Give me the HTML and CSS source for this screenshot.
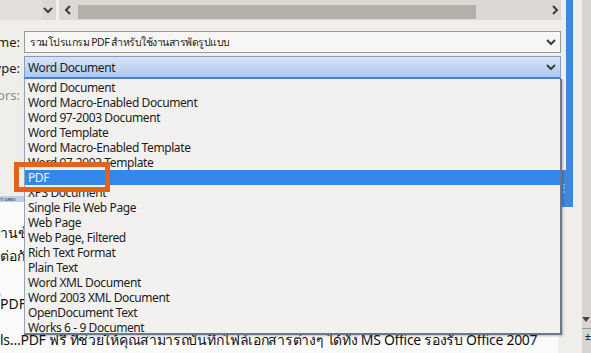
FILE: index.html
```html
<!DOCTYPE html>
<html lang="th">

<head>
    <meta charset="UTF-8">
    <meta name="viewport" content="width=device-width, initial-scale=1.0">
    <title>Save As</title>
    <link rel="stylesheet" href="styles.css">
</head>

<body>
    <div class="main">
        <!-- แถบเลื่อนแนวนอนด้านบน -->
        <div class="hbar">
            <div class="hbar-left"></div>
            <svg class="chev" width="10" height="8" viewBox="0 0 10 8"><polyline points="1,2 5,6 9,2" fill="none" stroke="#3c3c3c" stroke-width="2"/></svg>
            <div class="hbar-sep"></div>
            <svg class="arrow-left" width="8" height="10" viewBox="0 0 8 10"><polyline points="6,1 2,5 6,9" fill="none" stroke="#3c3c3c" stroke-width="2"/></svg>
            <div class="hbar-thumb"></div>
            <div class="hbar-rest"></div>
            <svg class="arrow-right" width="8" height="10" viewBox="0 0 8 10"><polyline points="2,1 6,5 2,9" fill="none" stroke="#3c3c3c" stroke-width="2"/></svg>
        </div>

        <!-- ฟอร์มบันทึกไฟล์ -->
        <div class="row row-name">
            <div class="label"><span>File name:</span></div>
            <div class="combo">
                <span class="combo-text combo-thai">รวมโปรแกรม PDF สำหรับใช้งานสารพัดรูปแบบ</span>
                <svg class="chev" width="10" height="8" viewBox="0 0 10 8"><polyline points="1,2 5,6 9,2" fill="none" stroke="#3c3c3c" stroke-width="2"/></svg>
            </div>
        </div>
        <div class="row row-type">
            <div class="label"><span>Save as type:</span></div>
            <div class="combo combo-active">
                <span class="combo-text">Word Document</span>
                <svg class="chev" width="10" height="8" viewBox="0 0 10 8"><polyline points="1,2 5,6 9,2" fill="none" stroke="#3c3c3c" stroke-width="2"/></svg>
            </div>
        </div>
        <div class="row row-authors">
            <div class="label label-muted"><span>Authors:</span></div>
        </div>

        <!-- เอกสารด้านหลัง -->
        <div class="doc">
            <div class="doc-ribbon"><span>ร่ แสดง</span></div>
            <p class="doc-line line-1">านข้อมูลของเอกสาร</p>
            <p class="doc-line line-2">ต่อกับโปรแกรม</p>
            <p class="doc-line line-3">ี้PDF</p>
            <p class="doc-line line-4">ls…PDF ฟรี ที่ช่วยให้คุณสามารถบันทึกไฟล์เอกสารต่างๆ ได้ทั้ง MS Office รองรับ Office 2007</p>
            <p class="doc-line line-5">ดาวน์โหลด ฟรี ทั้งหมด ที่นี่ ได้เลย</p>
        </div>

        <!-- รายการประเภทไฟล์ -->
        <ul class="type-list">
            <li>Word Document</li>
            <li>Word Macro-Enabled Document</li>
            <li>Word 97-2003 Document</li>
            <li>Word Template</li>
            <li>Word Macro-Enabled Template</li>
            <li>Word 97-2003 Template</li>
            <li class="selected">PDF</li>
            <li>XPS Document</li>
            <li>Single File Web Page</li>
            <li>Web Page</li>
            <li>Web Page, Filtered</li>
            <li>Rich Text Format</li>
            <li>Plain Text</li>
            <li>Word XML Document</li>
            <li>Word 2003 XML Document</li>
            <li>OpenDocument Text</li>
            <li>Works 6 - 9 Document</li>
        </ul>

        <div class="highlight-box"></div>
    </div>

    <!-- ขอบหน้าต่างด้านขวา -->
    <div class="vscroll">
        <div class="vtrack"></div>
        <div class="vthumb"><span class="grip"></span></div>
    </div>
    <div class="edge-gap"></div>
    <div class="edge-grey">
        <div class="edge-tools">
            <span class="edge-tri"></span>
            <span class="edge-line"></span>
            <span class="edge-mark">±</span>
        </div>
    </div>
</body>

</html>
```

FILE: styles.css
```css
:root {
    --dialog-bg: #f0eeeb;
    --text-dark: #1c1c1c;
    --select-blue: #3488ea;
    --mark-orange: #e9601b;
}

* {
    margin: 0;
    padding: 0;
    box-sizing: border-box;
}

body {
    width: 591px;
    height: 353px;
    overflow: hidden;
    display: flex;
    background: var(--dialog-bg);
    font-family: 'Noto Sans', 'DejaVu Sans', sans-serif;
    font-size: 12px;
    letter-spacing: -0.4px;
    color: var(--text-dark);
}

.main {
    position: relative;
    width: 561px;
    display: flex;
    flex-direction: column;
}

/* แถบเลื่อนด้านบน */
.hbar {
    height: 20px;
    display: flex;
    align-items: center;
    background: #dcd8d4;
}

.hbar-left {
    width: 42px;
    align-self: stretch;
    background: #e2ded9;
}

.hbar .chev {
    margin-left: 1px;
}

.hbar-sep {
    width: 3px;
    align-self: stretch;
    margin-left: 3px;
    background: #f3f1ef;
}

.arrow-left {
    margin-left: 5px;
}

.hbar-thumb {
    width: 398px;
    height: 14px;
    margin-left: 6px;
    margin-top: 4px;
    background: #b6aea8;
}

.hbar-rest {
    flex: 1;
}

.arrow-right {
    margin-right: 2px;
}

/* แถวฟอร์ม */
.row {
    display: flex;
    align-items: center;
}

.row-name {
    height: 22px;
    margin-top: 11px;
}

.row-type {
    height: 23px;
    margin-top: 3px;
}

.row-authors {
    height: 20px;
    margin-top: 6px;
}

.label {
    width: 24px;
    display: flex;
    justify-content: flex-end;
    padding-right: 4px;
    overflow: hidden;
    white-space: nowrap;
    font-size: 13px;
    letter-spacing: 0;
}

.label-muted {
    color: #8d8d8d;
}

.combo {
    flex: 1;
    height: 100%;
    display: flex;
    align-items: center;
    justify-content: space-between;
    padding: 0 4px 0 5px;
    background: #f7f6f4;
    border: 1px solid #9c9a98;
}

.combo-text {
    white-space: nowrap;
}

.combo-thai {
    font-size: 10.5px;
    letter-spacing: -0.5px;
}

.combo-active {
    padding-left: 3px;
    background: linear-gradient(#d8e5f8, #aec8ef);
    border: 1px solid #7d9dcb;
    border-bottom: 2px solid #4a80d0;
}

/* เอกสารด้านหลัง */
.doc {
    flex: 1;
    margin-top: 91px;
    margin-right: 3px;
    background: #fbfbfb;
    font-size: 14px;
    letter-spacing: 0;
    color: #111;
    white-space: nowrap;
    overflow: hidden;
}

.doc-ribbon {
    height: 6px;
    background: #bcd0ea;
    font-size: 5px;
    line-height: 6px;
    color: #333;
}

.doc-line {
    line-height: 23px;
}

.line-1 {
    margin-top: 19px;
}

.line-3 {
    margin-top: 25px;
}

.line-4 {
    margin-top: 13px;
    letter-spacing: -0.3px;
}

.line-5 {
    margin-top: 4px;
}

/* รายการประเภทไฟล์ */
.type-list {
    position: absolute;
    left: 24px;
    top: 79px;
    width: 538px;
    height: 256px;
    list-style: none;
    padding-top: 1px;
    background: #f3f1ef;
    border-left: 1px solid #97a4b3;
    border-right: 2px solid #6a7888;
    border-bottom: 2px solid #6a7888;
    box-shadow: 1px 1px 2px rgba(0, 0, 0, 0.25);
}

.type-list li {
    height: 15px;
    line-height: 15px;
    padding-left: 3px;
    white-space: nowrap;
}

.type-list .selected {
    background: var(--select-blue);
    color: #eef4ff;
}

.highlight-box {
    position: absolute;
    left: 14px;
    top: 162px;
    width: 96px;
    height: 30px;
    border: 5px solid var(--mark-orange);
}

/* ขอบด้านขวา */
.vscroll {
    width: 12px;
    display: flex;
    flex-direction: column;
}

.vtrack {
    height: 170px;
    margin-left: 5px;
    background: #3d87e0;
}

.vthumb {
    height: 37px;
    display: flex;
    align-items: center;
    background: #3d87e0;
    border-left: 1px solid #2c6cc0;
}

.grip {
    width: 2px;
    height: 9px;
    margin-left: 1px;
    border-left: 2px dotted #8fa6c4;
}

.edge-gap {
    width: 9px;
}

.edge-grey {
    flex: 1;
    display: flex;
    flex-direction: column;
    justify-content: flex-end;
    background: #d7d4d1;
}

.edge-tools {
    height: 36px;
    display: flex;
    flex-direction: column;
    align-items: flex-end;
}

.edge-tri {
    width: 0;
    height: 0;
    margin-right: 1px;
    border-left: 4px solid transparent;
    border-right: 4px solid transparent;
    border-top: 5px solid #444;
}

.edge-line {
    width: 100%;
    height: 1px;
    margin-top: 6px;
    background: #9a9794;
}

.edge-mark {
    font-size: 11px;
    line-height: 14px;
    letter-spacing: 0;
    color: #222;
}
```
